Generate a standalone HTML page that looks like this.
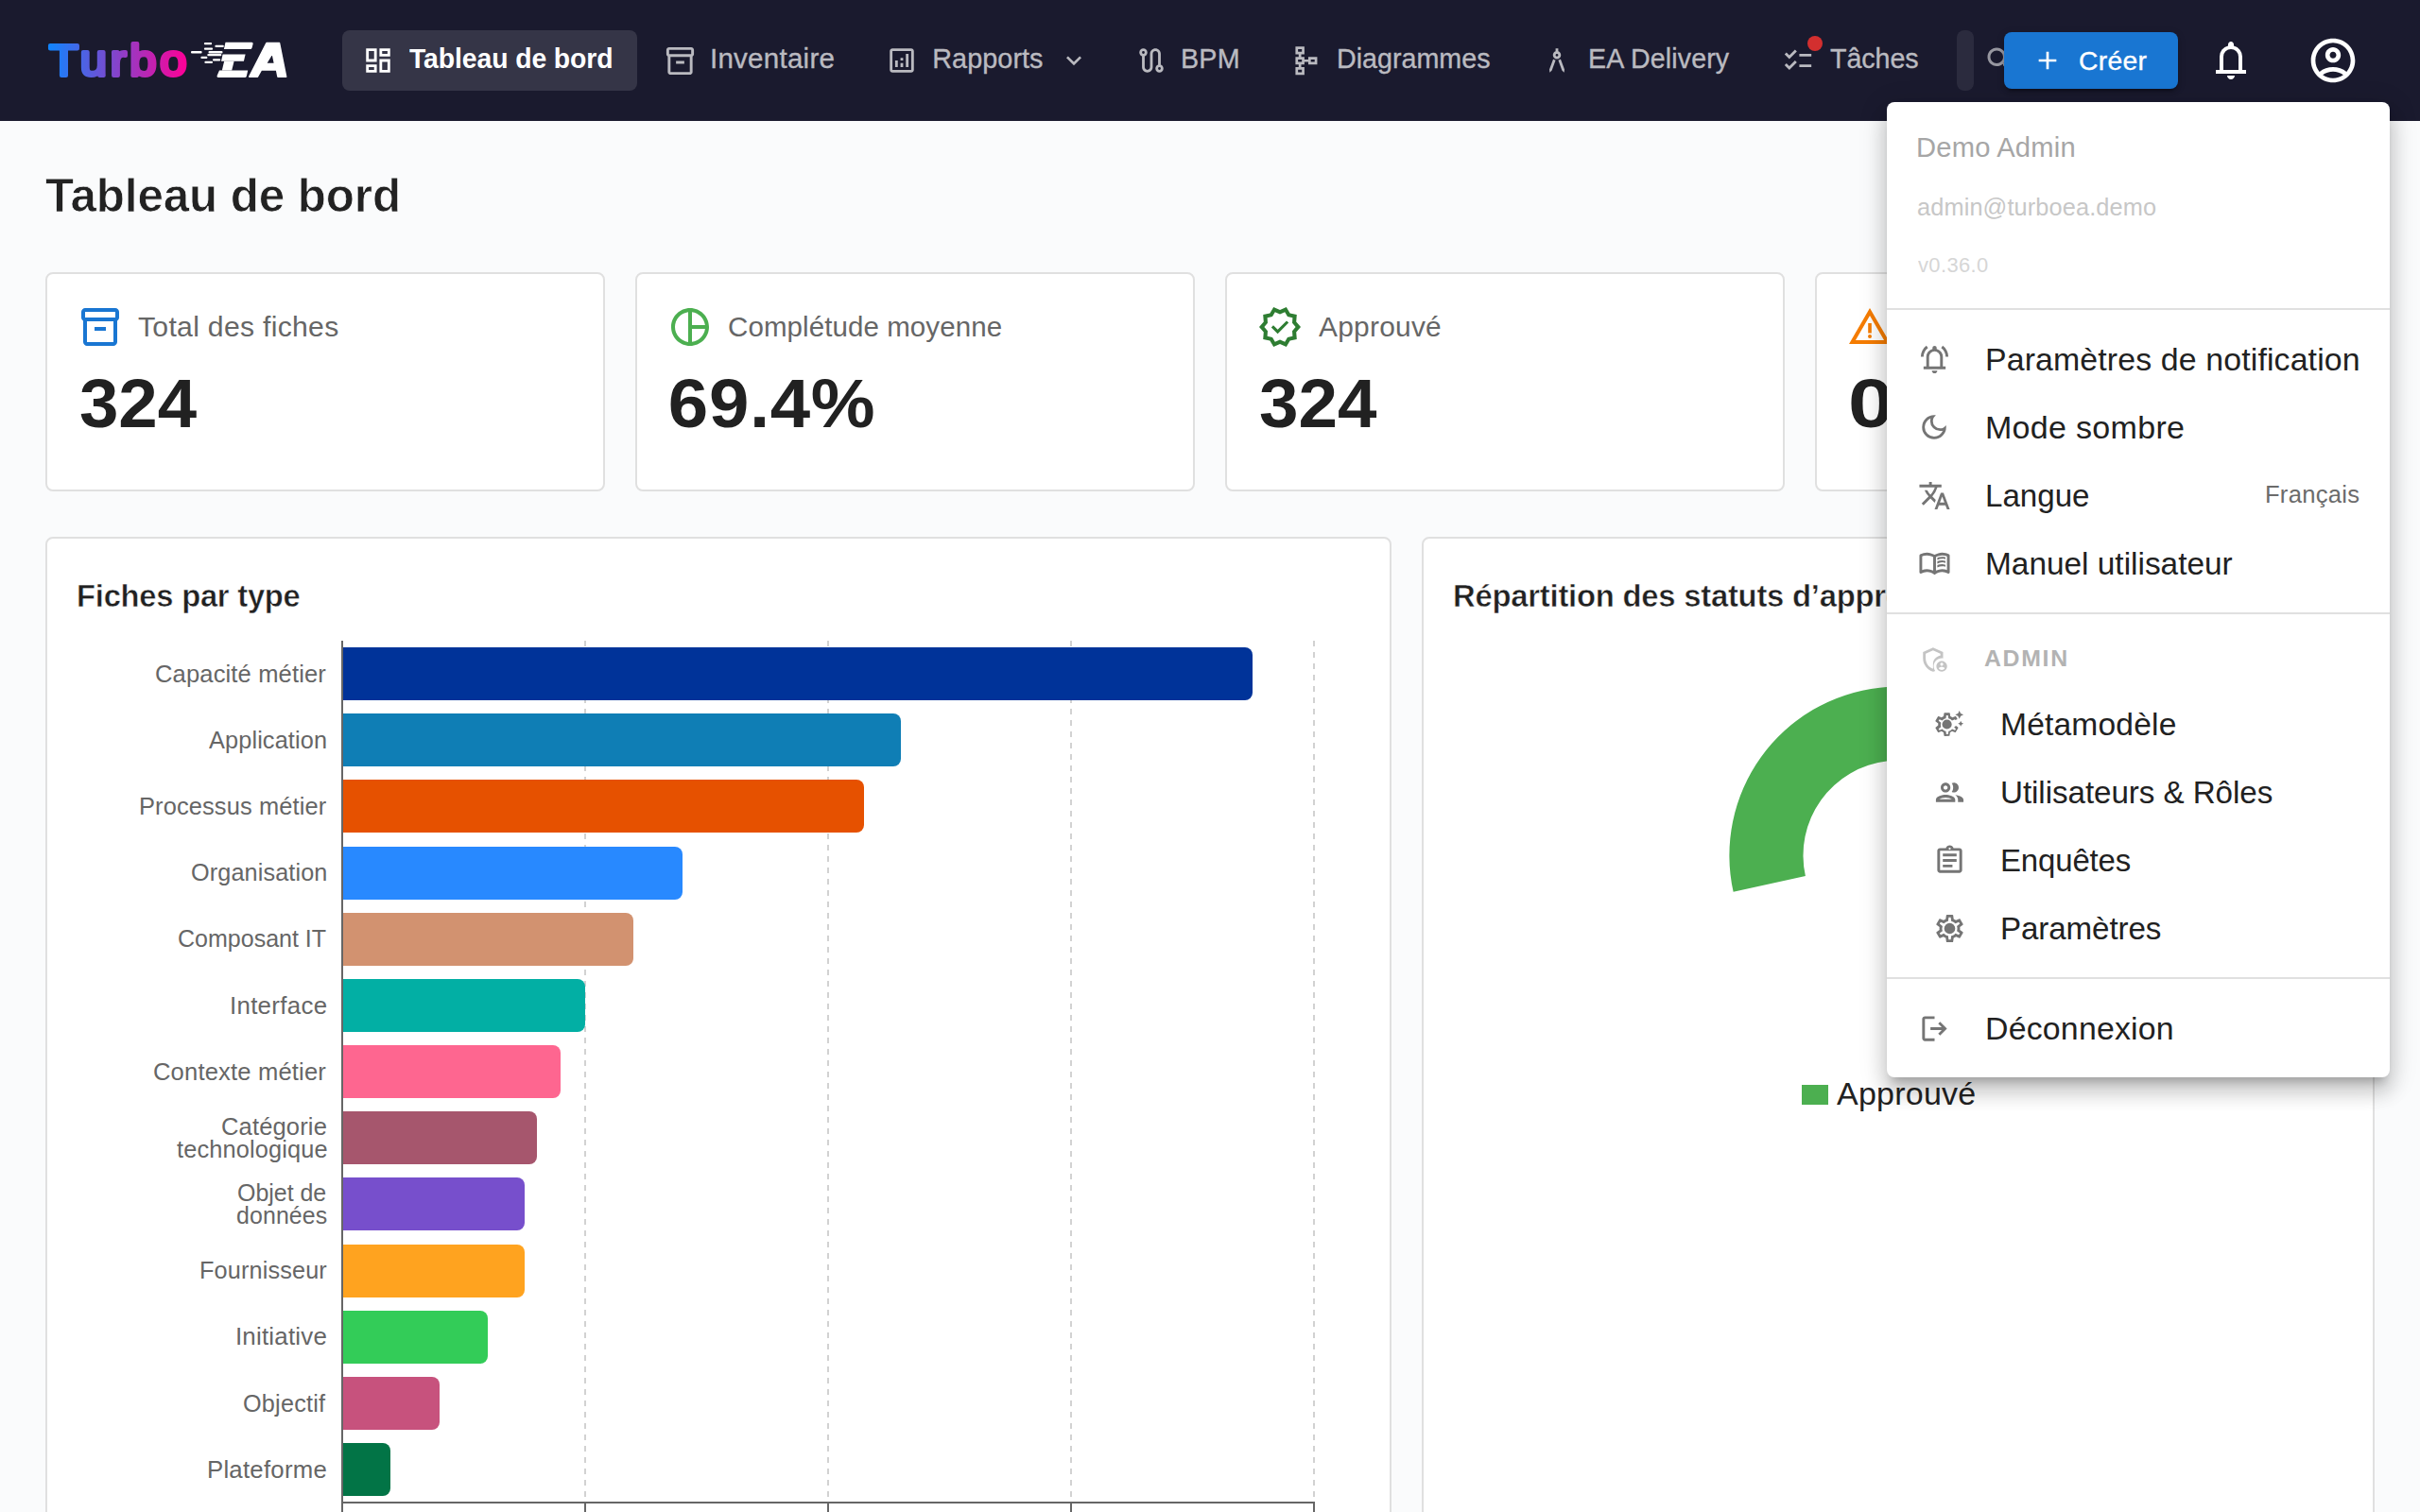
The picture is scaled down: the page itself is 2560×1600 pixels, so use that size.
<!DOCTYPE html>
<html lang="fr"><head><meta charset="utf-8"><title>Turbo EA</title>
<style>
html,body{margin:0;padding:0;}
body{width:2560px;height:1600px;overflow:hidden;position:relative;background:#fafbfc;font-family:"Liberation Sans", sans-serif;}
.abs,.t,.ic,.card,.bar,.grid,.tick{position:absolute;}
.t{white-space:nowrap;}
.ic{display:block;}
.nav{left:0;top:0;width:2560px;height:128px;background:#1a1a2e;}
.pill{left:362px;top:32px;width:312px;height:64px;border-radius:8px;background:rgba(255,255,255,0.12);}
.card{box-sizing:border-box;background:#fff;border:2px solid #e0e0e0;border-radius:8px;}
.bar{left:362px;height:56.1px;border-radius:0 8px 8px 0;}
.grid{top:678px;width:2px;height:911px;background:repeating-linear-gradient(to bottom,#d2d2d2 0,#d2d2d2 6px,transparent 6px,transparent 12px);}
.tick{top:1589px;width:2px;height:14px;background:#666;}
.menu{left:1996px;top:108px;width:532px;height:1032px;background:#fff;border-radius:8px;z-index:10;
 box-shadow:0 10px 10px -6px rgba(0,0,0,0.2),0 16px 20px 2px rgba(0,0,0,0.14),0 6px 28px 4px rgba(0,0,0,0.12);}
.div{left:1996px;width:532px;height:2px;background:#e0e0e0;z-index:12;}
</style></head><body>
<div class="abs nav"></div>
<div class="abs pill"></div>
<svg class="abs" style="left:40px;top:30px;width:280px;height:70px" viewBox="40 30 280 70">
<defs><linearGradient id="lg" gradientUnits="userSpaceOnUse" x1="-2" y1="0" x2="134" y2="0"><stop offset="0" stop-color="#0d86ff"/><stop offset="1" stop-color="#ff0096"/></linearGradient></defs>
<text transform="translate(51.9 79.8) scale(1.09 1)" x="0" y="0" font-family="Liberation Sans, sans-serif" font-weight="400" font-size="46.5" fill="url(#lg)" stroke="url(#lg)" stroke-width="4" stroke-linejoin="round" stroke-linecap="round" textLength="133.6" lengthAdjust="spacing">Turbo</text>
<g fill="#fff">
<rect x="215.9" y="45" width="8.2" height="2.3" rx="1"/>
<rect x="227.4" y="47.8" width="9.4" height="2.2" rx="1"/>
<rect x="215.9" y="50.5" width="9.2" height="2.2" rx="1"/>
<rect x="202" y="54" width="11.6" height="2.4" rx="1"/>
<rect x="220.5" y="54" width="15" height="2.4" rx="1"/>
<rect x="219.3" y="57.1" width="15" height="2.2" rx="1"/>
<rect x="212.4" y="59.8" width="7" height="2.1" rx="1"/>
<rect x="225" y="62.3" width="8.2" height="2.1" rx="1"/>
<rect x="216.4" y="64.8" width="8.6" height="2.1" rx="1"/>
<path d="M238.5 44.8H266a1.6 1.6 0 0 1 1.55 2l-.95 3.700a2 2 0 0 1-1.950 1.500H236.900z"/>
<path d="M235.600 57.600H259.600l-1.700 7.100H234z"/>
<path d="M237.200 64.700h10.400l-2.400 9.800h-10.400z"/>
<path d="M232 74.500h30.200l-1.350 5.900a2 2 0 0 1-1.950 1.600H231.200a1.600 1.600 0 0 1-1.550-2z"/>
<path fill-rule="evenodd" stroke="#fff" stroke-width="1.6" stroke-linejoin="round" d="M282 45.600H295.500L302.600 81.200H294L292.600 74H276.300L272.400 81.200H263.800ZM288.200 56.200L290.600 67.600H281.200Z"/>
</g>
</svg>

<div class="abs" style="left:1912px;top:37.7px;width:16px;height:16px;border-radius:50%;background:#d32f2f;z-index:3"></div>
<div class="abs" style="left:2070px;top:32px;width:18px;height:64px;border-radius:8px;background:rgba(255,255,255,0.08)"></div>
<div class="abs" style="left:2120px;top:34px;width:184px;height:60px;border-radius:8px;background:#1976d2;z-index:5;box-shadow:0 6px 2px -4px rgba(0,0,0,0.2),0 4px 4px 0 rgba(0,0,0,0.14),0 2px 10px 0 rgba(0,0,0,0.12)"></div>

<div class="card" style="left:48px;top:288px;width:592px;height:232px"></div>
<div class="card" style="left:672px;top:288px;width:592px;height:232px"></div>
<div class="card" style="left:1296px;top:288px;width:592px;height:232px"></div>
<div class="card" style="left:1920px;top:288px;width:592px;height:232px"></div>

<div class="card" style="left:48px;top:568px;width:1424px;height:1100px"></div>
<div class="card" style="left:1504px;top:568px;width:1008px;height:1100px"></div>

<div class="grid" style="left:617.8px"></div><div class="grid" style="left:874.7px"></div><div class="grid" style="left:1131.6px"></div><div class="grid" style="left:1389.0px"></div>
<div class="bar" style="top:685.03px;width:963.2px;background:#003399"></div>
<div class="bar" style="top:755.1999999999999px;width:590.8px;background:#0f7eb5"></div>
<div class="bar" style="top:825.37px;width:552.2px;background:#e65100"></div>
<div class="bar" style="top:895.54px;width:359.6px;background:#2889ff"></div>
<div class="bar" style="top:965.71px;width:308.2px;background:#d29270"></div>
<div class="bar" style="top:1035.8799999999999px;width:256.8px;background:#02afa4"></div>
<div class="bar" style="top:1106.05px;width:231.2px;background:#fe6690"></div>
<div class="bar" style="top:1176.22px;width:205.5px;background:#a6566d"></div>
<div class="bar" style="top:1246.39px;width:192.6px;background:#774fcc"></div>
<div class="bar" style="top:1316.56px;width:192.6px;background:#ffa31f"></div>
<div class="bar" style="top:1386.73px;width:154.1px;background:#33cc58"></div>
<div class="bar" style="top:1456.8999999999999px;width:102.7px;background:#c7527d"></div>
<div class="bar" style="top:1527.07px;width:51.4px;background:#027446"></div>
<div class="abs" style="left:361px;top:678px;width:2px;height:913px;background:#666"></div>
<div class="abs" style="left:361px;top:1589px;width:1030px;height:2px;background:#666"></div>
<div class="tick" style="left:361.0px"></div><div class="tick" style="left:617.8px"></div><div class="tick" style="left:874.7px"></div><div class="tick" style="left:1131.6px"></div><div class="tick" style="left:1389.0px"></div>

<svg class="abs" style="left:0;top:0;width:2560px;height:1600px;pointer-events:none" viewBox="0 0 2560 1600"><path d="M2186.60,905.20 A178.6,178.6 0 1 0 1833.63,943.86 L1909.88,926.95 A100.5,100.5 0 1 1 2108.50,905.20 Z" fill="#4caf50"/></svg>
<div class="abs" style="left:1906px;top:1147.5px;width:28px;height:21px;background:#4caf50"></div>

<div class="abs menu"></div>
<div class="abs div" style="top:326px"></div>
<div class="abs div" style="top:648px"></div>
<div class="abs div" style="top:1034px"></div>

<svg class="ic" style="left:383.0px;top:47.0px;width:34px;height:34px;" viewBox="0 0 24 24"><path fill="#fff" d="M19 5v2h-4V5zM9 5v6H5V5zm10 8v6h-4v-6zM9 17v2H5v-2zM21 3h-8v6h8zM11 3H3v10h8zm10 8h-8v10h8zm-10 4H3v6h8z"/></svg>
<svg class="ic" style="left:702.0px;top:46.5px;width:35px;height:35px;" viewBox="0 0 24 24"><path fill="#babac0" d="M20 2H4c-1 0-2 .9-2 2v3.01c0 .72.43 1.34 1 1.69V20c0 1.1 1.1 2 2 2h14c.9 0 2-.9 2-2V8.7c.57-.35 1-.97 1-1.69V4c0-1.1-1-2-2-2zm-1 18H5V9h14v11zm1-13H4V4h16v3zM9 12h6v2H9z"/></svg>
<svg class="ic" style="left:936.5px;top:47.0px;width:34px;height:34px;" viewBox="0 0 24 24"><path fill="#babac0" d="M19 3H5c-1.1 0-2 .9-2 2v14c0 1.1.9 2 2 2h14c1.1 0 2-.9 2-2V5c0-1.1-.9-2-2-2zm0 16H5V5h14v14zM7 12h2v5H7zm8-5h2v10h-2zm-4 7h2v3h-2zm0-4h2v2h-2z"/></svg>
<svg class="ic" style="left:1119.6px;top:48px;width:32px;height:32px;" viewBox="0 0 24 24"><path fill="#babac0" d="M16.590 8.590 12 13.170 7.410 8.590 6 10l6 6 6-6z"/></svg>
<svg class="ic" style="left:1201.0px;top:47.0px;width:34px;height:34px;" viewBox="0 0 24 24"><path fill="#babac0" d="M19 15.18V7c0-2.21-1.79-4-4-4s-4 1.790-4 4v10c0 1.100-.9 2-2 2s-2-.9-2-2V8.820C8.160 8.400 9 7.300 9 6c0-1.660-1.340-3-3-3S3 4.340 3 6c0 1.300.84 2.400 2 2.820V17c0 2.210 1.790 4 4 4s4-1.790 4-4V7c0-1.100.9-2 2-2s2 .9 2 2v8.180c-1.160.41-2 1.510-2 2.820 0 1.660 1.340 3 3 3s3-1.340 3-3c0-1.300-.84-2.400-2-2.820zM6 7a1 1 0 1 1 0-2 1 1 0 0 1 0 2zm12 12a1 1 0 1 1 0-2 1 1 0 0 1 0 2z"/></svg>
<svg class="ic" style="left:1364.75px;top:47.75px;width:32.5px;height:32.5px;" viewBox="0 0 24 24"><path fill="#babac0" d="M14 9v2h-3V9H8.500V7H11V1H4v6h2.500v2H4v6h2.500v2H4v6h7v-6H8.500v-2H11v-2h3v2h7V9h-7zM6 3h3v2H6V3zm3 18H6v-2h3v2zm0-8H6v-2h3v2zm10 0h-3v-2h3v2z"/></svg>
<svg class="ic" style="left:1629.7px;top:47.0px;width:34px;height:34px;" viewBox="0 0 24 24"><path fill="#babac0" d="M6.360 18.780 6.610 21l1.620-1.540 2.770-7.600c-.68-.17-1.280-.51-1.770-.98l-2.870 7.900zM14.770 10.880c-.49.47-1.100.81-1.770.98l2.770 7.600L17.390 21l.26-2.220-2.880-7.900zM15 8c0-1.300-.84-2.400-2-2.820V3h-2v2.180C9.840 5.600 9 6.700 9 8c0 1.660 1.340 3 3 3s3-1.340 3-3zm-3 1c-.55 0-1-.45-1-1s.45-1 1-1 1 .45 1 1-.45 1-1 1z"/></svg>
<svg class="ic" style="left:1884.8px;top:47.0px;width:34px;height:34px;" viewBox="0 0 24 24"><path fill="#babac0" d="M22 7h-9v2h9V7zm0 8h-9v2h9v-2zM5.540 11 2 7.460l1.410-1.410 2.120 2.120 4.240-4.240 1.410 1.410L5.540 11zm0 8L2 15.460l1.410-1.410 2.120 2.120 4.240-4.240 1.410 1.410L5.540 19z"/></svg>
<svg class="ic" style="left:2098px;top:46px;width:36px;height:36px;" viewBox="0 0 24 24"><path fill="rgba(255,255,255,0.55)" d="M15.500 14h-.79l-.28-.27C15.410 12.590 16 11.110 16 9.500 16 5.910 13.090 3 9.500 3S3 5.910 3 9.500 5.910 16 9.500 16c1.610 0 3.090-.59 4.230-1.570l.27.28v.79l5 4.990L20.490 19l-4.990-5zm-6 0C7.010 14 5 11.990 5 9.500S7.010 5 9.500 5 14 7.010 14 9.500 11.990 14 9.500 14z"/></svg>
<svg class="ic" style="left:2150px;top:48px;width:32px;height:32px;z-index:6;" viewBox="0 0 24 24"><path fill="#fff" d="M19 13h-6v6h-2v-6H5v-2h6V5h2v6h6v2z"/></svg>
<svg class="ic" style="left:2336px;top:40px;width:48px;height:48px;" viewBox="0 0 24 24"><path fill="#fff" d="M4 19v-2h2v-7q0-2.075 1.25-3.688T10.5 4.2V3.5q0-.625.438-1.062T12 2q.625 0 1.063.438T13.5 3.5v.7q2 .5 3.25 2.113T18 10v7h2v2H4Zm8 3q-.825 0-1.412-.587T10 20h4q0 .825-.587 1.413T12 22Zm-4-5h8v-7q0-1.65-1.175-2.825T12 6q-1.65 0-2.825 1.175T8 10v7Z"/></svg>
<svg class="ic" style="left:2440px;top:36px;width:56px;height:56px;" viewBox="0 0 24 24"><path fill="#fff" d="M12 2C6.480 2 2 6.480 2 12s4.480 10 10 10 10-4.480 10-10S17.520 2 12 2zM7.350 18.500C8.660 17.560 10.260 17 12 17s3.340.56 4.650 1.500c-1.310.94-2.910 1.500-4.650 1.500s-3.340-.56-4.650-1.500zm10.790-1.380C16.450 15.800 14.320 15 12 15s-4.450.8-6.140 2.120C4.700 15.730 4 13.950 4 12c0-4.420 3.580-8 8-8s8 3.580 8 8c0 1.950-.7 3.730-1.860 5.120zM12 6c-1.930 0-3.500 1.570-3.500 3.500S10.070 13 12 13s3.500-1.570 3.500-3.500S13.930 6 12 6zm0 5c-.83 0-1.500-.67-1.500-1.500S11.170 8 12 8s1.500.67 1.500 1.500S12.830 11 12 11z"/></svg>
<svg class="ic" style="left:82px;top:322px;width:48px;height:48px;" viewBox="0 0 24 24"><path fill="#1976d2" d="M20 2H4c-1 0-2 .9-2 2v3.01c0 .72.43 1.34 1 1.69V20c0 1.1 1.1 2 2 2h14c.9 0 2-.9 2-2V8.7c.57-.35 1-.97 1-1.69V4c0-1.1-1-2-2-2zm-1 18H5V9h14v11zm1-13H4V4h16v3zM9 12h6v2H9z"/></svg>
<svg class="ic" style="left:706px;top:322px;width:48px;height:48px;" viewBox="0 0 24 24"><path fill="#4caf50" d="M12 2C6.500 2 2 6.500 2 12s4.500 10 10 10 10-4.500 10-10S17.500 2 12 2zm1 2.070c3.610.45 6.480 3.330 6.930 6.930H13V4.070zM4 12c0-4.060 3.070-7.440 7-7.930v15.870c-3.930-.5-7-3.880-7-7.940zm9 7.930V13h6.930c-.45 3.610-3.320 6.480-6.930 6.930z"/></svg>
<svg class="ic" style="left:1330px;top:322px;width:48px;height:48px;" viewBox="0 0 24 24"><path fill="#2e7d32" d="m23 12-2.400-2.800.3-3.700-3.600-.8-1.900-3.200L12 3 8.600 1.500 6.700 4.700l-3.600.8.3 3.700L1 12l2.400 2.800-.3 3.700 3.600.8 1.900 3.200L12 21l3.400 1.500 1.900-3.200 3.600-.8-.3-3.700zm-4.300 4.900-2.700.6-1.400 2.400-2.600-1.100-2.600 1.100L8 17.500l-2.700-.6.2-2.800L3.700 12l1.800-2.100-.2-2.800L8 6.500l1.400-2.400L12 5.200l2.600-1.100L16 6.500l2.700.6-.2 2.800 1.800 2.100-1.800 2.100zM8.5 11.1 10.8 13.4 15.5 8.7 16.6 9.8 10.8 15.6 7.4 12.2z"/></svg>
<svg class="ic" style="left:1954px;top:322px;width:48px;height:48px;" viewBox="0 0 24 24"><path fill="#f57c00" d="M12 5.99 19.53 19H4.47L12 5.99M12 2 1 21h22L12 2zM11.1 10h1.8v5.2h-1.8zM12 16.05a1 1 0 1 1 0 2 1 1 0 0 1 0-2z"/></svg>
<svg class="ic" style="left:2028.5px;top:362.5px;width:35px;height:35px;z-index:12;" viewBox="0 0 24 24"><path fill="#757575" d="M2 10q0-2.5 1.1-4.588T6.05 1.95l1.2 1.6Q5.75 4.65 4.875 6.35T4 10H2Zm18 0q0-1.95-.875-3.65T16.75 3.55l1.2-1.6q1.85 1.375 2.95 3.463T22 10h-2ZM4 19v-2h2v-7q0-2.075 1.25-3.688T10.5 4.2V3.5q0-.625.438-1.062T12 2q.625 0 1.063.438T13.5 3.5v.7q2 .5 3.25 2.113T18 10v7h2v2H4Zm8 3q-.825 0-1.412-.587T10 20h4q0 .825-.587 1.413T12 22Zm-4-5h8v-7q0-1.65-1.175-2.825T12 6q-1.65 0-2.825 1.175T8 10v7Z"/></svg>
<svg class="ic" style="left:2029px;top:435px;width:34px;height:34px;z-index:12;" viewBox="0 0 24 24"><path fill="#757575" d="M12 21q-3.75 0-6.375-2.625T3 12q0-3.75 2.625-6.375T12 3q.35 0 .688.025t.662.075q-1.025.725-1.638 1.888T11.1 7.5q0 2.25 1.575 3.825T16.5 12.9q1.375 0 2.525-.613T20.9 10.65q.05.325.075.662T21 12q0 3.75-2.625 6.375T12 21Zm0-2q2.2 0 3.95-1.213t2.55-3.162q-.5.125-1 .2t-1 .075q-3.075 0-5.238-2.163T9.1 7.5q0-.5.075-1t.2-1q-1.95.8-3.163 2.55T5 12q0 2.9 2.05 4.95T12 19Z"/></svg>
<svg class="ic" style="left:2028.5px;top:506.5px;width:35px;height:35px;z-index:12;" viewBox="0 0 24 24"><path fill="#757575" d="m12.870 15.070-2.540-2.510.03-.03A17.500 17.500 0 0 0 14.070 6H17V4h-7V2H8v2H1v2h11.170C11.500 7.920 10.440 9.750 9 11.350 8.070 10.320 7.300 9.190 6.690 8h-2c.73 1.630 1.730 3.170 2.980 4.560l-5.090 5.020L4 19l5-5 3.110 3.110zM18.500 10h-2L12 22h2l1.120-3h4.750L21 22h2zm-2.620 7 1.620-4.330L19.120 17z"/></svg>
<svg class="ic" style="left:2028.5px;top:578.5px;width:35px;height:35px;z-index:12;" viewBox="0 0 24 24"><path fill="#757575" d="M6.5 16q1.175 0 2.288.263T11 17.05V7.2q-1.025-.6-2.175-.9T6.5 6q-.9 0-1.788.175T3 6.7v9.9q.875-.3 1.738-.45T6.5 16Zm6.5 1.05q1.1-.525 2.212-.788T17.5 16q.9 0 1.763.15T21 16.6V6.7q-.825-.35-1.713-.525T17.5 6q-1.175 0-2.325.3T13 7.2v9.85Zm-1 2.95q-1.2-.95-2.6-1.475T6.5 18q-1.05 0-2.063.275T2.5 19.05q-.525.275-1.012-.025T1 18.15V6.1q0-.275.138-.525T1.55 5.2q1.15-.6 2.4-.9T6.5 4q1.45 0 2.838.375T12 5.5q1.275-.75 2.663-1.125T17.5 4q1.3 0 2.55.3t2.4.9q.275.125.413.375T23 6.1v12.05q0 .575-.487.875t-1.013.025q-.925-.5-1.938-.775T17.5 18q-1.5 0-2.9.525T12 20Zm2-10.7V7.65q.825-.35 1.688-.525T17.5 6.95q.625 0 1.225.1t1.175.25v1.5q-.575-.225-1.163-.338T17.5 8.35q-.95 0-1.825.238T14 9.3Zm0 5.5v-1.7q.825-.35 1.688-.512t1.812-.163q.625 0 1.225.1t1.175.25v1.5q-.575-.225-1.163-.337T17.5 13.8q-.95 0-1.825.225T14 14.8Zm0-2.75V10.35q.825-.35 1.688-.525t1.812-.175q.625 0 1.225.1t1.175.25v1.5q-.575-.225-1.163-.337T17.5 11.05q-.95 0-1.825.238T14 12.05Z"/></svg>
<svg class="ic" style="left:2030.4px;top:681.1px;width:34px;height:34px;z-index:12;" viewBox="0 0 24 24"><path fill="#c4c4c4" d="M17 11c.34 0 .67.04 1 .09V6.270L10.500 3 3 6.270v4.910c0 4.540 3.200 8.790 7.500 9.820.55-.13 1.080-.32 1.600-.55-.69-.98-1.100-2.170-1.100-3.450 0-3.310 2.690-6 6-6zM10.500 18.940C7.270 17.870 5 14.630 5 11.180V7.580l5.500-2.400 5.500 2.400v1.500c-2.900.45-5.200 2.700-5.500 5.700v4.160zM17 13c-2.210 0-4 1.790-4 4s1.790 4 4 4 4-1.790 4-4-1.790-4-4-4zm0 1.380c.62 0 1.120.51 1.120 1.120s-.51 1.120-1.120 1.120-1.120-.51-1.120-1.120.5-1.120 1.120-1.120zm0 5.370c-.93 0-1.740-.46-2.240-1.170.05-.72 1.510-1.080 2.240-1.080s2.190.36 2.240 1.080c-.5.710-1.310 1.170-2.240 1.170z"/></svg>
<svg class="ic" style="left:2044.5px;top:748.5px;width:35px;height:35px;z-index:12;" viewBox="0 0 24 24"><path fill="#757575" d="M10 8.500a3.500 3.500 0 1 1 0 7 3.500 3.500 0 0 1 0-7zM8.300 20.500c-.22 0-.4-.16-.43-.37l-.32-2.280c-.54-.21-1-.5-1.450-.85l-2.140.87c-.19.07-.42 0-.52-.19l-1.720-2.980a.42.42 0 0 1 .1-.55l1.810-1.430L3.600 12l.03-.72-1.810-1.400a.42.42 0 0 1-.1-.55l1.720-2.980c.1-.19.33-.27.52-.19l2.140.86c.45-.33.91-.63 1.450-.84l.32-2.280c.03-.21.21-.36.43-.36h3.440c.22 0 .4.150.43.360l.32 2.280c.54.21 1 .51 1.450.84l2.140-.86c.19-.08.42 0 .52.190l1.050 1.800-1.600.7-.3-.5-2.070.89a4.660 4.660 0 0 0-2.600-1.520l-.31-2.240H9.550l-.32 2.240c-1.030.21-1.940.76-2.600 1.530l-2.080-.9-.64 1.120L5.720 10.800a4.770 4.770 0 0 0 0 3.100L3.900 15.240l.64 1.120 2.090-.9c.66.76 1.560 1.310 2.590 1.520l.32 2.250h1.300l.32-2.240c1.020-.22 1.930-.77 2.590-1.530l2.090.9.640-1.120-1.300-.95 1.300-1.300 1.500 1.150c.16.13.21.36.1.55l-1.720 2.980c-.1.190-.33.27-.52.19l-2.140-.86c-.45.33-.91.63-1.450.84l-.32 2.280c-.03.210-.21.36-.43.36zM19 2l.94 2.060L22 5l-2.060.94L19 8l-.94-2.060L16 5l2.060-.94zM20 9.500l.63 1.370L22 11.500l-1.370.63L20 13.500l-.63-1.370L18 11.500l1.370-.63z"/></svg>
<svg class="ic" style="left:2044.5px;top:820.5px;width:35px;height:35px;z-index:12;" viewBox="0 0 24 24"><path fill="#757575" d="M9 13.750c-2.340 0-7 1.170-7 3.500V19h14v-1.750c0-2.330-4.660-3.500-7-3.500zM4.340 17c.84-.58 2.870-1.250 4.660-1.250s3.820.67 4.660 1.250H4.340zM9 12c1.930 0 3.500-1.570 3.500-3.500S10.930 5 9 5 5.500 6.570 5.500 8.500 7.070 12 9 12zm0-5c.83 0 1.500.67 1.500 1.500S9.830 10 9 10s-1.500-.67-1.500-1.500S8.170 7 9 7zm7.040 6.810c1.160.84 1.960 1.960 1.960 3.440V19h4v-1.750c0-2.020-3.500-3.170-5.960-3.440zM15 12c1.930 0 3.500-1.570 3.500-3.500S16.930 5 15 5c-.54 0-1.040.13-1.500.35.63.89 1 1.980 1 3.150s-.37 2.260-1 3.150c.46.22.96.35 1.500.35z"/></svg>
<svg class="ic" style="left:2044.5px;top:892.5px;width:35px;height:35px;z-index:12;" viewBox="0 0 24 24"><path fill="#757575" d="M7 15h7v2H7zm0-4h10v2H7zm0-4h10v2H7zm12-4h-4.180C14.400 1.840 13.300 1 12 1s-2.400.84-2.820 2H5c-1.100 0-2 .9-2 2v14c0 1.100.9 2 2 2h14c1.100 0 2-.9 2-2V5c0-1.100-.9-2-2-2zm-7-.25c.41 0 .75.34.75.75s-.34.75-.75.75-.75-.34-.75-.75.34-.75.75-.75zM19 19H5V5h14v14z"/></svg>
<svg class="ic" style="left:2044.5px;top:964.5px;width:35px;height:35px;z-index:12;" viewBox="0 0 24 24"><path fill="#757575" d="M12 8a4 4 0 0 1 4 4 4 4 0 0 1-4 4 4 4 0 0 1-4-4 4 4 0 0 1 4-4m-2 14c-.25 0-.46-.18-.5-.42l-.37-2.650c-.63-.25-1.170-.59-1.690-.99l-2.490 1.010c-.22.08-.49 0-.61-.22l-2-3.460a.493.493 0 0 1 .12-.64l2.110-1.660L4.500 12l.07-1-2.110-1.630a.493.493 0 0 1-.12-.64l2-3.460c.12-.22.39-.31.61-.22l2.490 1c.52-.39 1.060-.73 1.690-.98l.37-2.650c.04-.24.25-.42.5-.42h4c.25 0 .46.18.5.42l.37 2.650c.63.25 1.170.59 1.690.98l2.490-1c.22-.09.49 0 .61.22l2 3.460c.13.22.07.49-.12.64L19.430 11l.07 1-.07 1 2.110 1.630c.19.15.25.42.12.64l-2 3.460c-.12.22-.39.31-.61.22l-2.490-1c-.52.39-1.060.73-1.690.98l-.37 2.650c-.04.24-.25.42-.5.42zm1.250-18-.37 2.610c-1.200.25-2.260.89-3.030 1.780L5.440 7.350l-.75 1.300L6.800 10.200a5.550 5.550 0 0 0 0 3.600l-2.120 1.560.75 1.300 2.430-1.040c.77.88 1.820 1.520 3.010 1.760l.37 2.620h1.520l.37-2.610c1.190-.25 2.240-.89 3.010-1.770l2.430 1.040.75-1.300-2.120-1.550c.4-1.170.4-2.440 0-3.610l2.110-1.550-.75-1.300-2.410 1.040a5.420 5.420 0 0 0-3.030-1.770L12.750 4z"/></svg>
<svg class="ic" style="left:2028.5px;top:1070.5px;width:35px;height:35px;z-index:12;" viewBox="0 0 24 24"><path fill="#757575" d="M5 21q-.825 0-1.412-.587T3 19V5q0-.825.588-1.412T5 3h7v2H5v14h7v2H5Zm11-4-1.375-1.45 2.55-2.55H9v-2h8.175l-2.55-2.55L16 7l5 5-5 5Z"/></svg>
<span class="t" style="left:433.28px;top:48px;font-size:28.8px;line-height:29px;color:#fff;font-weight:700;letter-spacing:-0.111px;transform:scaleX(0.9858);transform-origin:0.00px 50%;">Tableau de bord</span>
<span class="t" style="left:751.42px;top:48px;font-size:28.8px;line-height:29px;color:#babac0;letter-spacing:0.236px;transform:scaleX(1.0265);transform-origin:2.00px 50%;-webkit-text-stroke:0.35px currentColor;">Inventaire</span>
<span class="t" style="left:986.18px;top:48px;font-size:28.8px;line-height:29px;color:#babac0;letter-spacing:0.071px;-webkit-text-stroke:0.35px currentColor;">Rapports</span>
<span class="t" style="left:1249.28px;top:48px;font-size:28.8px;line-height:29px;color:#babac0;letter-spacing:0.187px;transform:scaleX(0.9957);transform-origin:2.00px 50%;-webkit-text-stroke:0.35px currentColor;">BPM</span>
<span class="t" style="left:1414.28px;top:48px;font-size:28.8px;line-height:29px;color:#babac0;letter-spacing:-0.006px;transform:scaleX(0.9962);transform-origin:2.00px 50%;-webkit-text-stroke:0.35px currentColor;">Diagrammes</span>
<span class="t" style="left:1680.16px;top:48px;font-size:28.8px;line-height:29px;color:#babac0;letter-spacing:0.152px;transform:scaleX(0.9918);transform-origin:2.00px 50%;-webkit-text-stroke:0.35px currentColor;">EA Delivery</span>
<span class="t" style="left:1935.80px;top:48px;font-size:28.8px;line-height:29px;color:#babac0;letter-spacing:-0.067px;transform:scaleX(0.9947);transform-origin:0.00px 50%;-webkit-text-stroke:0.35px currentColor;">Tâches</span>
<span class="t" style="left:2199.28px;top:51px;font-size:27.6px;line-height:28px;color:#fff;letter-spacing:0.317px;transform:scaleX(1.0247);transform-origin:1.00px 50%;-webkit-text-stroke:0.35px currentColor;z-index:6;">Créer</span>
<span class="t" style="left:48.14px;top:182px;font-size:50.2px;line-height:50px;color:#222;font-weight:700;letter-spacing:-0.103px;transform:scaleX(0.9833);transform-origin:0.00px 50%;-webkit-text-stroke:0.75px #fafbfc;">Tableau de bord</span>
<span class="t" style="left:146.28px;top:331px;font-size:29.3px;line-height:29px;color:#666;letter-spacing:0.288px;transform:scaleX(1.0290);transform-origin:0.00px 50%;">Total des fiches</span>
<span class="t" style="left:770.04px;top:331px;font-size:29.3px;line-height:29px;color:#666;letter-spacing:0.087px;transform:scaleX(1.0069);transform-origin:1.00px 50%;">Complétude moyenne</span>
<span class="t" style="left:1395.30px;top:331px;font-size:29.3px;line-height:29px;color:#666;letter-spacing:0.240px;transform:scaleX(1.0207);transform-origin:0.00px 50%;">Approuvé</span>
<span class="t" style="left:2018.00px;top:331px;font-size:29.3px;line-height:29px;color:#666;">Cassé</span>
<span class="t" style="left:84.00px;top:391px;font-size:71.5px;line-height:72px;color:#212121;font-weight:700;letter-spacing:-0.007px;transform:scaleX(1.0415);transform-origin:1.00px 50%;">324</span>
<span class="t" style="left:706.92px;top:391px;font-size:71.5px;line-height:72px;color:#212121;font-weight:700;letter-spacing:0.570px;transform:scaleX(1.0666);transform-origin:2.00px 50%;">69.4%</span>
<span class="t" style="left:1331.60px;top:391px;font-size:71.5px;line-height:72px;color:#212121;font-weight:700;letter-spacing:0.002px;transform:scaleX(1.0431);transform-origin:1.00px 50%;">324</span>
<span class="t" style="left:1954.60px;top:391px;font-size:71.5px;line-height:72px;color:#212121;font-weight:700;transform:scaleX(1.0400);transform-origin:2.00px 50%;letter-spacing:0;transform:scaleX(1.22);transform-origin:0 50%;">0</span>
<span class="t" style="left:80.66px;top:614px;font-size:33.5px;line-height:34px;color:#212121;font-weight:700;letter-spacing:-0.216px;transform:scaleX(0.9753);transform-origin:2.00px 50%;-webkit-text-stroke:0.5px #fff;">Fiches par type</span>
<span class="t" style="left:1537.00px;top:614px;font-size:33.5px;line-height:34px;color:#212121;font-weight:700;letter-spacing:-0.235px;transform:scaleX(0.9790);transform-origin:2.00px 50%;-webkit-text-stroke:0.5px #fff;">Répartition des statuts d’approbation</span>
<span class="t" style="left:1943.00px;top:1141px;font-size:33.5px;line-height:34px;color:#222;letter-spacing:0.215px;transform:scaleX(1.0161);transform-origin:0.00px 50%;">Approuvé</span>
<span class="t" style="left:2027.28px;top:141px;font-size:29.3px;line-height:29px;color:#a6a6a6;letter-spacing:0.185px;transform:scaleX(0.9955);transform-origin:2.00px 50%;z-index:12;">Demo Admin</span>
<span class="t" style="left:2027.80px;top:207px;font-size:25.1px;line-height:25px;color:#c7c7c7;letter-spacing:0.116px;transform:scaleX(1.0099);transform-origin:1.00px 50%;z-index:12;">admin@turboea.demo</span>
<span class="t" style="left:2029.30px;top:270px;font-size:21.2px;line-height:21px;color:#d6d6d6;letter-spacing:0.377px;transform:scaleX(1.0348);transform-origin:0.00px 50%;z-index:12;">v0.36.0</span>
<span class="t" style="left:2100.30px;top:364px;font-size:33.5px;line-height:34px;color:#212121;letter-spacing:0.134px;transform:scaleX(1.0104);transform-origin:2.00px 50%;z-index:12;">Paramètres de notification</span>
<span class="t" style="left:2100.30px;top:436px;font-size:33.5px;line-height:34px;color:#212121;letter-spacing:0.296px;transform:scaleX(1.0155);transform-origin:2.00px 50%;z-index:12;">Mode sombre</span>
<span class="t" style="left:2100.30px;top:508px;font-size:33.5px;line-height:34px;color:#212121;letter-spacing:-0.014px;transform:scaleX(0.9893);transform-origin:2.00px 50%;z-index:12;">Langue</span>
<span class="t" style="left:2396.28px;top:511px;font-size:25.1px;line-height:25px;color:#6b6b6b;letter-spacing:0.272px;transform:scaleX(1.0194);transform-origin:2.00px 50%;z-index:12;">Français</span>
<span class="t" style="left:2100.30px;top:580px;font-size:33.5px;line-height:34px;color:#212121;letter-spacing:-0.001px;transform:scaleX(0.9968);transform-origin:2.00px 50%;z-index:12;">Manuel utilisateur</span>
<span class="t" style="left:2099.38px;top:686px;font-size:23px;line-height:23px;color:#b3b3b3;font-weight:700;letter-spacing:1.550px;transform:scaleX(1.0797);transform-origin:0.00px 50%;z-index:12;">ADMIN</span>
<span class="t" style="left:2116.16px;top:750px;font-size:33.5px;line-height:34px;color:#212121;letter-spacing:0.159px;transform:scaleX(1.0029);transform-origin:2.00px 50%;z-index:12;">Métamodèle</span>
<span class="t" style="left:2116.16px;top:822px;font-size:33.5px;line-height:34px;color:#212121;letter-spacing:-0.068px;transform:scaleX(0.9906);transform-origin:2.00px 50%;z-index:12;">Utilisateurs & Rôles</span>
<span class="t" style="left:2116.16px;top:894px;font-size:33.5px;line-height:34px;color:#212121;letter-spacing:-0.144px;transform:scaleX(0.9835);transform-origin:2.00px 50%;z-index:12;">Enquêtes</span>
<span class="t" style="left:2116.16px;top:966px;font-size:33.5px;line-height:34px;color:#212121;letter-spacing:-0.099px;transform:scaleX(0.9891);transform-origin:2.00px 50%;z-index:12;">Paramètres</span>
<span class="t" style="left:2100.30px;top:1072px;font-size:33.5px;line-height:34px;color:#212121;letter-spacing:0.196px;transform:scaleX(1.0112);transform-origin:2.00px 50%;z-index:12;">Déconnexion</span>
<span class="t" style="left:163.92px;top:701px;font-size:25.1px;line-height:25px;color:#666;letter-spacing:0.137px;transform:scaleX(1.0183);transform-origin:1.00px 50%;">Capacité métier</span>
<span class="t" style="left:221.30px;top:771px;font-size:25.1px;line-height:25px;color:#666;letter-spacing:0.121px;transform:scaleX(1.0083);transform-origin:0.00px 50%;">Application</span>
<span class="t" style="left:146.54px;top:841px;font-size:25.1px;line-height:25px;color:#666;letter-spacing:0.116px;transform:scaleX(1.0138);transform-origin:2.00px 50%;">Processus métier</span>
<span class="t" style="left:201.92px;top:911px;font-size:25.1px;line-height:25px;color:#666;letter-spacing:0.115px;transform:scaleX(1.0059);transform-origin:1.00px 50%;">Organisation</span>
<span class="t" style="left:187.66px;top:981px;font-size:25.1px;line-height:25px;color:#666;letter-spacing:-0.008px;transform:scaleX(0.9974);transform-origin:1.00px 50%;">Composant IT</span>
<span class="t" style="left:243.30px;top:1052px;font-size:25.1px;line-height:25px;color:#666;letter-spacing:0.301px;transform:scaleX(1.0305);transform-origin:2.00px 50%;">Interface</span>
<span class="t" style="left:161.92px;top:1122px;font-size:25.1px;line-height:25px;color:#666;letter-spacing:0.153px;transform:scaleX(1.0202);transform-origin:1.00px 50%;">Contexte métier</span>
<span class="t" style="left:233.54px;top:1180px;font-size:25.1px;line-height:25px;color:#666;letter-spacing:0.150px;transform:scaleX(1.0171);transform-origin:1.00px 50%;">Catégorie</span>
<span class="t" style="left:186.80px;top:1204px;font-size:25.1px;line-height:25px;color:#666;letter-spacing:0.134px;transform:scaleX(1.0104);transform-origin:0.00px 50%;">technologique</span>
<span class="t" style="left:251.16px;top:1250px;font-size:25.1px;line-height:25px;color:#666;letter-spacing:-0.021px;transform:scaleX(0.9948);transform-origin:1.00px 50%;">Objet de</span>
<span class="t" style="left:249.66px;top:1274px;font-size:25.1px;line-height:25px;color:#666;letter-spacing:0.104px;transform:scaleX(0.9928);transform-origin:1.00px 50%;">données</span>
<span class="t" style="left:210.92px;top:1332px;font-size:25.1px;line-height:25px;color:#666;letter-spacing:0.134px;transform:scaleX(1.0072);transform-origin:2.00px 50%;">Fournisseur</span>
<span class="t" style="left:248.54px;top:1402px;font-size:25.1px;line-height:25px;color:#666;letter-spacing:0.207px;transform:scaleX(1.0323);transform-origin:2.00px 50%;">Initiative</span>
<span class="t" style="left:257.28px;top:1473px;font-size:25.1px;line-height:25px;color:#666;letter-spacing:0.220px;transform:scaleX(1.0049);transform-origin:1.00px 50%;">Objectif</span>
<span class="t" style="left:218.66px;top:1543px;font-size:25.1px;line-height:25px;color:#666;letter-spacing:0.246px;transform:scaleX(1.0264);transform-origin:2.00px 50%;">Plateforme</span>
</body></html>
